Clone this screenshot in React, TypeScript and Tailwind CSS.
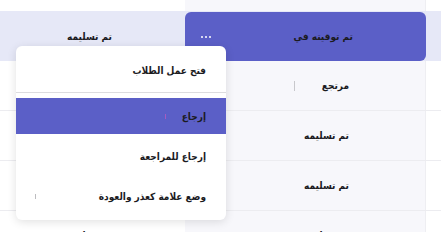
import React from "react";

const rows = [
    { a: "تم تسليمه", b: "مرتجع", tick: true },
    { a: "تم تسليمه", b: "تم تسليمه", tick: false },
    { a: "تم تسليمه", b: "تم تسليمه", tick: false },
    { a: "تم تسليمه", b: "تم تسليمه", tick: false },
];

export default function App() {
    return (
        <div
            className="relative w-[441px] h-[232px] overflow-hidden bg-white text-[#1b1b1f]"
            style={{ fontFamily: '"DejaVu Sans Condensed", "DejaVu Sans", sans-serif' }}
        >
            {/* top strip */}
            <div className="flex h-[11px]">
                <div className="w-[185px] bg-white" />
                <div className="w-[241px] bg-[#f7f7fb] border-r border-[#eeeef2]" />
                <div className="flex-1 bg-white" />
            </div>

            {/* header row */}
            <div className="flex h-[50px] bg-[#e6e8f7]">
                <div dir="rtl" className="w-[185px] flex items-center pr-[73px] text-[10px] font-bold">
                    تم تسليمه
                </div>
                <div className="w-[241px] pt-px">
                    <div className="h-full rounded-[6px] bg-[#5b5fc7] flex items-center pl-[16px] pr-[73px]">
                        <div className="flex gap-[2px]">
                            <span className="w-[2px] h-[2px] rounded-full bg-white" />
                            <span className="w-[2px] h-[2px] rounded-full bg-white" />
                            <span className="w-[2px] h-[2px] rounded-full bg-white" />
                        </div>
                        <div dir="rtl" className="flex-1 text-[10px] font-bold">تم توقيته في</div>
                    </div>
                </div>
                <div className="flex-1" />
            </div>

            {/* body rows */}
            {rows.map((r, i) => (
                <div key={i} className="flex h-[50px] border-b border-[#ececf0]">
                    <div dir="rtl" className="w-[185px] flex items-center pr-[73px] text-[10px] font-bold bg-white">
                        {r.a}
                    </div>
                    <div className="w-[241px] bg-[#f7f7fb] border-r border-[#eeeef2] flex items-center pr-[76px]">
                        {r.tick && <span className="ml-[109px] w-px h-[10px] bg-[#c8c8cc]" />}
                        <div dir="rtl" className="flex-1 text-[10px] font-bold">{r.b}</div>
                    </div>
                    <div className="flex-1 bg-white" />
                </div>
            ))}

            {/* dropdown menu */}
            <div
                dir="rtl"
                className="absolute left-[16px] top-[46px] w-[210px] rounded-[6px] bg-white py-1.5 shadow-[0_2px_10px_rgba(0,0,0,0.12)] text-[10px] font-bold"
            >
                <div className="h-9 flex items-center pr-5">فتح عمل الطلاب</div>
                <div className="mt-1 mb-[5px] h-px bg-[#dcdcdf]" />
                <div className="flex flex-col gap-1">
                    <div className="h-9 flex items-center pr-5 bg-[#5b5fc7]">
                        <span>إرجاع</span>
                        <span className="mr-[16px] w-px h-[5px] bg-[#a55bc0]" />
                    </div>
                    <div className="h-9 flex items-center pr-5">إرجاع للمراجعة</div>
                    <div className="h-9 flex items-center pr-5">
                        <span>وضع علامة كعذر والعودة</span>
                        <span className="mr-auto ml-[19px] w-px h-[5px] bg-[#bdbdc0]" />
                    </div>
                </div>
            </div>
        </div>
    );
}
